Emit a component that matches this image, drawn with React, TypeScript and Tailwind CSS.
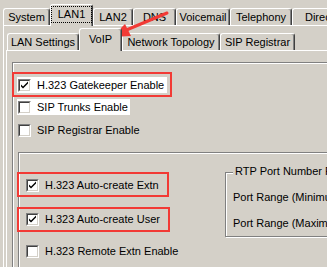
import React from 'react';

const RED = '#f23a35';

type TabProps = { label: string; width: number; selected?: boolean; focus?: boolean; tall: number };

const Tab: React.FC<TabProps> = ({ label, width, selected, focus, tall }) => (
  <div
    style={{ width }}
    className={
      'flex shrink-0 items-center justify-center rounded-t-[3px] border-l border-t border-r border-l-white border-t-white border-r-[#404040] bg-[#d4d0c8] shadow-[inset_-1px_0_0_#808080] ' +
      (selected ? 'relative z-10 -mb-px pb-[2px] ' : 'h-[17px] ')
    }
  >
    <div style={selected ? { height: tall } : undefined} className="flex items-center">
      {focus ? (
        <span className="border border-dotted border-black px-[6px] leading-[15px]">{label}</span>
      ) : (
        <span className="whitespace-nowrap leading-[13px]">{label}</span>
      )}
    </div>
  </div>
);

const Check: React.FC<{ checked?: boolean }> = ({ checked }) => (
  <span className="flex h-[13px] w-[13px] shrink-0 border border-t-[#808080] border-l-[#808080] border-r-white border-b-white">
    <span className="flex flex-1 items-center justify-center border border-t-[#404040] border-l-[#404040] border-r-[#d4d0c8] border-b-[#d4d0c8] bg-white">
      {checked && (
        <svg width="9" height="9" viewBox="0 0 9 9">
          <path d="M1 3.5 L1 5.5 L3 7.5 L8 2.5 L8 0.5 L3 5.5 Z" fill="#000" />
        </svg>
      )}
    </span>
  </span>
);

type RowProps = {
  label: string;
  checked?: boolean;
  white?: number;
  red?: { left: number; top: number; width: number };
  className?: string;
};

const Row: React.FC<RowProps> = ({ label, checked, white, red, className }) => (
  <div
    style={white ? { width: white } : undefined}
    className={'relative flex h-[16px] items-center ' + (white ? 'bg-white ' : '') + (className ?? '')}
  >
    <span className="ml-px">
      <Check checked={checked} />
    </span>
    <span className="ml-[6px] whitespace-nowrap leading-[13px]">{label}</span>
    {red && (
      <span
        style={{ left: red.left, top: red.top, width: red.width }}
        className="pointer-events-none absolute h-[25px] border-2 border-[#f23a35]"
      />
    )}
  </div>
);

export default function App() {
  return (
    <div className="relative h-[267px] w-[327px] overflow-hidden bg-[#d4d0c8] font-['Liberation_Sans',Arial,sans-serif] text-[11px] text-black">
      {/* top tab strip */}
      <div className="flex h-[20px] items-end pl-[3px] pt-0 mt-[5px]">
        <Tab label="System" width={47} tall={17} />
        <Tab label="LAN1" width={43} selected focus tall={19} />
        <Tab label="LAN2" width={40} tall={17} />
        <Tab label="DNS" width={43} tall={17} />
        <Tab label="Voicemail" width={54} tall={17} />
        <Tab label="Telephony" width={62} tall={17} />
        <Tab label="Directory" width={70} tall={17} />
      </div>

      {/* LAN1 page */}
      <div className="ml-[3px] w-[400px] border-l border-t border-white pt-[3px]">
        <div className="flex h-[21px] items-end pl-[3px]">
          <Tab label="LAN Settings" width={72} tall={17} />
          <Tab label="VoIP" width={43} selected tall={20} />
          <Tab label="Network Topology" width={98} tall={17} />
          <Tab label="SIP Registrar" width={75} tall={17} />
        </div>

        {/* VoIP page */}
        <div className="ml-[2px] h-[260px] border-l border-t border-white pl-[5px] pt-[11px]">
          <div className="h-[260px] w-[400px] border border-[#808080] shadow-[inset_1px_1px_0_#fff,1px_1px_0_#fff] pl-[4px] pt-[14px]">
            <Row label="H.323 Gatekeeper Enable" checked white={150} red={{ left: -5, top: -5, width: 160 }} />
            <Row label="SIP Trunks Enable" white={113} className="mt-[6px]" />
            <Row label="SIP Registrar Enable" className="mt-[7px]" />

            <div className="ml-px mt-[14px] flex h-[200px] w-[400px] border border-[#808080] shadow-[inset_1px_1px_0_#fff,1px_1px_0_#fff]">
              <div className="w-[206px] shrink-0 pl-[6px] pt-[24px]">
                <Row label="H.323 Auto-create Extn" checked red={{ left: -8, top: -5, width: 152 }} />
                <Row label="H.323 Auto-create User" checked className="mt-[18px]" red={{ left: -8, top: -4, width: 153 }} />
                <Row label="H.323 Remote Extn Enable" className="mt-[16px]" />
              </div>

              <div className="relative mt-[19px] h-[65px] w-[200px] shrink-0 border border-[#808080] shadow-[inset_1px_1px_0_#fff,1px_1px_0_#fff]">
                <span className="absolute left-[7px] top-[-8px] whitespace-nowrap bg-[#d4d0c8] px-[2px] leading-[13px]">
                  RTP Port Number Range
                </span>
                <div className="flex flex-col pl-[7px] pt-[18px] leading-[13px]">
                  <span className="whitespace-nowrap">Port Range (Minimum)</span>
                  <span className="mt-[13px] whitespace-nowrap">Port Range (Maximum)</span>
                </div>
              </div>
            </div>
          </div>
        </div>
      </div>

      {/* annotation arrow */}
      <svg className="pointer-events-none absolute left-0 top-0" width="327" height="267" viewBox="0 0 327 267">
        <line x1="167" y1="13" x2="124" y2="31" stroke={RED} strokeWidth="3" strokeLinecap="round" />
        <polygon points="112,37 125,24 131,36" fill={RED} />
      </svg>
    </div>
  );
}
